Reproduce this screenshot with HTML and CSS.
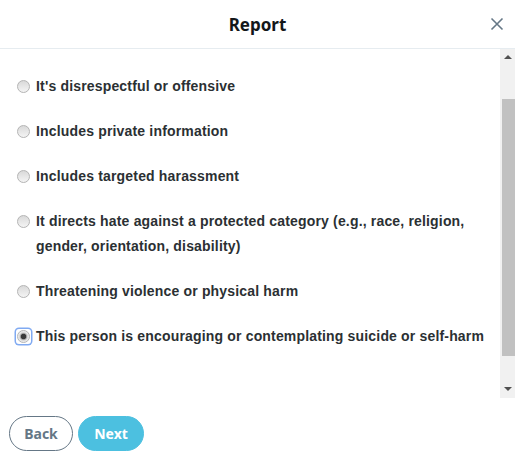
FILE: index.html
```html
<!DOCTYPE html>
<html>
<head>
	<meta charset="utf-8">
	<meta name="viewport" content="width=device-width, initial-scale=1.0">
	<title>Report</title>
	<link rel="stylesheet" href="styles.css">
</head>

<body>
	<div class="dialog">
		<header class="dialog-header">
			<span></span>
			<h1>Report</h1>
			<button class="close" aria-label="Close">
				<svg width="14" height="14" viewBox="0 0 14 14"><path d="M1.5 1.5l11 11M12.5 1.5l-11 11" stroke="#657786" stroke-width="1.6" fill="none"/></svg>
			</button>
		</header>

		<div class="dialog-body">
			<!-- report reasons -->
			<form class="reasons">
				<label class="reason"><span class="radio-wrap"><input type="radio" name="reason"></span><span>It's disrespectful or offensive</span></label>
				<label class="reason"><span class="radio-wrap"><input type="radio" name="reason"></span><span>Includes private information</span></label>
				<label class="reason"><span class="radio-wrap"><input type="radio" name="reason"></span><span>Includes targeted harassment</span></label>
				<label class="reason"><span class="radio-wrap"><input type="radio" name="reason"></span><span>It directs hate against a protected category (e.g., race, religion, gender, orientation, disability)</span></label>
				<label class="reason"><span class="radio-wrap"><input type="radio" name="reason"></span><span>Threatening violence or physical harm</span></label>
				<label class="reason"><span class="radio-wrap focused"><input type="radio" name="reason" checked></span><span>This person is encouraging or contemplating suicide or self-harm</span></label>
			</form>

			<!-- scroll track -->
			<div class="scrollbar">
				<span class="arrow up"></span>
				<span class="thumb"></span>
				<span class="arrow down"></span>
			</div>
		</div>

		<footer class="dialog-footer">
			<button class="btn btn-back">Back</button>
			<button class="btn btn-next">Next</button>
		</footer>
	</div>
</body>
</html>
```

FILE: styles.css
```css
body {
	margin: 0; background: #fff; font-family: 'Liberation Sans', Arial, sans-serif; color: #2b3033;
}
.dialog { display: flex; flex-direction: column; height: 461px; }

.dialog-header {
	height: 48px; border-bottom: 1px solid #e6ecf0; display: grid; grid-template-columns: 1fr auto 1fr; align-items: center;
}
.dialog-header h1 {
	margin: 0; font-family: 'Noto Sans', sans-serif; font-size: 17px; font-weight: bold; color: #14171a;
}
.close {
	justify-self: end; margin-right: 11px; border: 0; background: none; padding: 0; width: 14px; height: 14px; display: flex;
}

.dialog-body { display: flex; height: 349px; }
.reasons { flex: 1; padding: 25px 10px 0 16px; display: flex; flex-direction: column; gap: 20px; }
.reason { display: flex; align-items: flex-start; gap: 5px; font-size: 14px; font-weight: bold; line-height: 25px; letter-spacing: 0.17px; }

.radio-wrap { flex: none; width: 15px; height: 15px; margin-top: 5px; display: flex; align-items: center; justify-content: center; border-radius: 3px; }
.radio-wrap.focused { box-shadow: 0 0 0 1.5px #80aaf2; }
.reason input {
	appearance: none; margin: 0; width: 13px; height: 13px; border-radius: 50%; border: 1px solid #b4b4b4;
	background: linear-gradient(#d9d9d9, #f4f4f4); box-sizing: border-box;
}
.reason input:checked {
	background: radial-gradient(circle, #3a3a3a 0 2.4px, #9a9a9a 3px, #d8d8d8 4px, #f2f2f2 5.5px);
}

.scrollbar { width: 15px; background: #f1f1f1; display: flex; flex-direction: column; align-items: center; }
.arrow { width: 0; height: 0; border-left: 4px solid transparent; border-right: 4px solid transparent; }
.arrow.up { border-bottom: 4px solid #505050; margin: 6px 0 0; }
.arrow.down { border-top: 4px solid #505050; margin: auto 0 7px; }
.thumb { width: 13px; height: 257px; margin-top: 40px; margin-left: 1px; background: #c1c1c1; }

.dialog-footer { display: flex; gap: 5px; padding: 18px 9px 0; }
.btn {
	height: 35px; border-radius: 999px; font-family: 'Noto Sans', sans-serif; font-size: 14px; font-weight: bold; cursor: pointer;
}
.btn-back { width: 64px; background: #fff; border: 1px solid #657786; color: #657786; }
.btn-next { width: 66px; background: #4cc0e0; border: 1px solid #4cc0e0; color: #fff; }
```
